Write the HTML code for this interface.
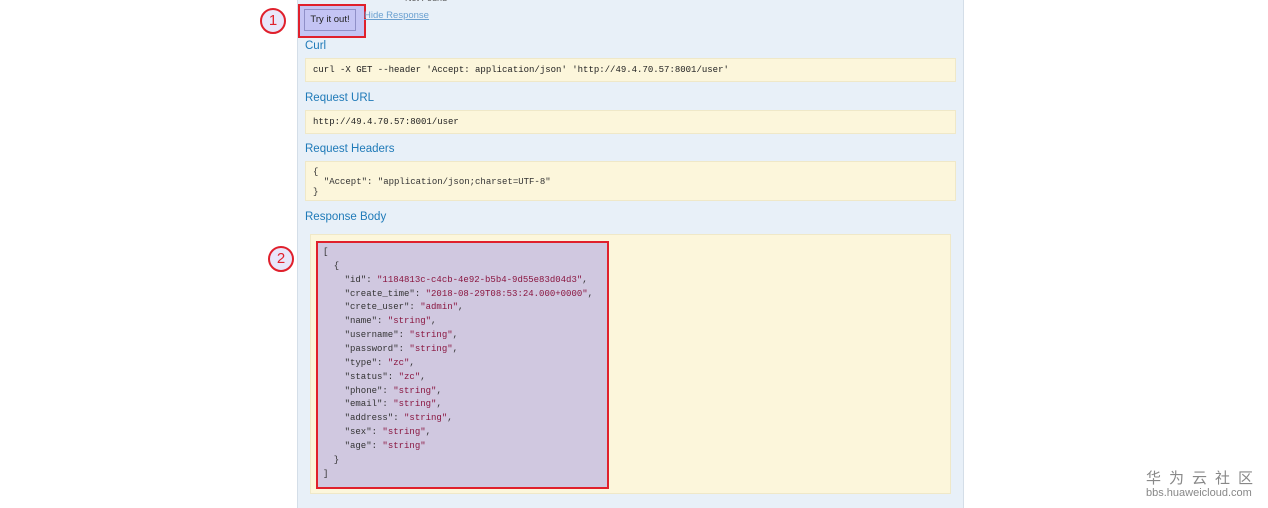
<!DOCTYPE html><html><head><style>
body{margin:0;width:1268px;height:508px;background:#fff;position:relative;overflow:hidden;font-family:"Liberation Sans",sans-serif}
.panel{position:absolute;left:297px;top:0;width:665px;height:508px;background:#e8f0f8;border-left:1px solid #d4dee8;border-right:1px solid #d4dee8}
.a{position:absolute}
h4{position:absolute;margin:0;font-weight:normal;font-size:11.5px;color:#1f7ab8}
.box{position:absolute;left:305px;width:651px;background:#fcf6db;border:1px solid #efe8c8;font-family:"Liberation Mono",monospace;font-size:9px;color:#222;box-sizing:border-box;padding-left:7px}
.circ{position:absolute;width:26px;height:26px;border:2px solid #e0202c;border-radius:50%;box-sizing:border-box;color:#e0202c;font-size:15px;text-align:center;line-height:22px;background:#e8e6fa}
pre{margin:0;font-family:"Liberation Mono",monospace;font-size:9px;line-height:13.86px;color:#333}
.s{color:#8a1640}
</style></head><body>
<div class="panel"></div>
<div class="a" style="left:405px;top:-7px;font-size:9px;color:#555">Not Found</div>
<div class="circ" style="left:260px;top:8px">1</div>
<div class="a" style="left:298px;top:4px;width:68px;height:34px;border:2px solid #e0202c;box-sizing:border-box;background:#c4c4f4"></div>
<div class="a" style="left:304px;top:9px;width:52px;height:22px;border:1px solid #9090c8;box-sizing:border-box;font-size:9.5px;text-align:center;line-height:20px;color:#222">Try it out!</div>
<div class="a" style="left:364px;top:10px;font-size:9.5px;color:#6aa0d0;text-decoration:underline">Hide Response</div>
<h4 style="left:305px;top:40px">Curl</h4>
<div class="box" style="top:58px;height:24px;line-height:23px">curl -X GET --header 'Accept: application/json' 'http://49.4.70.57:8001/user'</div>
<h4 style="left:305px;top:92px">Request URL</h4>
<div class="box" style="top:110px;height:24px;line-height:23px">http://49.4.70.57:8001/user</div>
<h4 style="left:305px;top:143px">Request Headers</h4>
<div class="box" style="top:161px;height:40px;padding-top:5px"><pre style="line-height:10px">{
  "Accept": "application/json;charset=UTF-8"
}</pre></div>
<h4 style="left:305px;top:211px">Response Body</h4>
<div class="a" style="left:310px;top:234px;width:641px;height:260px;background:#fcf6db;border:1px solid #efe8c8;box-sizing:border-box"></div>
<div class="circ" style="left:268px;top:246px">2</div>
<div class="a" style="left:316px;top:241px;width:293px;height:248px;border:2px solid #e0202c;box-sizing:border-box;background:#d0c8e0;padding:3px 0 0 5px"><pre>[
  {
    "id": <span class="s">"1184813c-c4cb-4e92-b5b4-9d55e83d04d3"</span>,
    "create_time": <span class="s">"2018-08-29T08:53:24.000+0000"</span>,
    "crete_user": <span class="s">"admin"</span>,
    "name": <span class="s">"string"</span>,
    "username": <span class="s">"string"</span>,
    "password": <span class="s">"string"</span>,
    "type": <span class="s">"zc"</span>,
    "status": <span class="s">"zc"</span>,
    "phone": <span class="s">"string"</span>,
    "email": <span class="s">"string"</span>,
    "address": <span class="s">"string"</span>,
    "sex": <span class="s">"string"</span>,
    "age": <span class="s">"string"</span>
  }
]</pre></div>
<div class="a" style="left:1146px;top:467px;font-family:'Noto Sans CJK SC',sans-serif;font-size:15px;color:#888;letter-spacing:8px">华为云社区</div>
<div class="a" style="left:1146px;top:487px;font-size:11px;color:#888">bbs.huaweicloud.com</div>
</body></html>
